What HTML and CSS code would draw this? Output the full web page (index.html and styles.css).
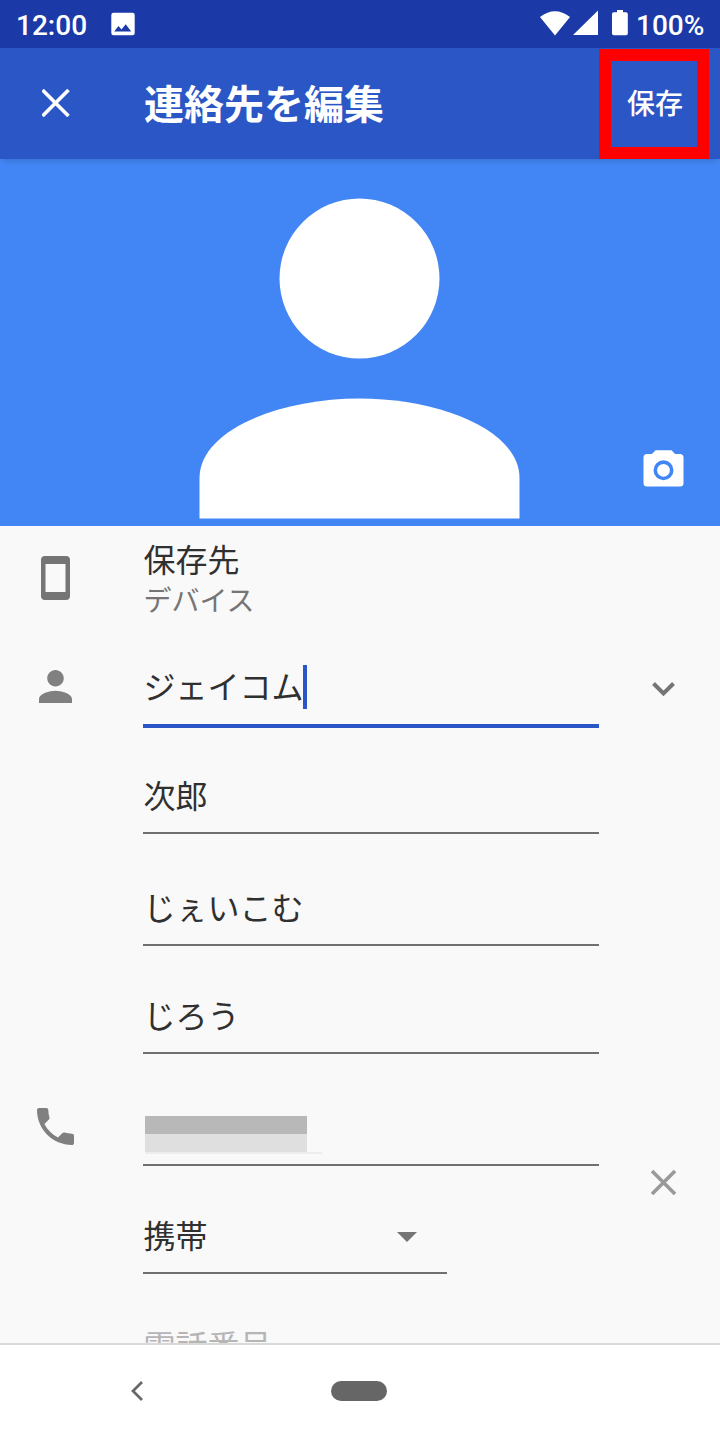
FILE: index.html
```html
<!DOCTYPE html>
<html lang="ja">
<head>
<meta charset="utf-8">
<title>連絡先を編集</title>
<link rel="stylesheet" href="styles.css">
</head>
<body>
<div class="screen">
  <header class="status">
    <span class="clock">12:00</span>
    <svg class="status-picture" width="24" height="24" viewBox="0 0 24 24"><path fill="#fff" fill-rule="evenodd" d="M2.5 .7h19a2.200 2.200 0 0 1 2.200 2.200v18.200a2.200 2.200 0 0 1-2.200 2.200h-19a2.200 2.200 0 0 1-2.200-2.200V2.900A2.200 2.200 0 0 1 2.500 .7zM3.200 19.500h17l-5.500-7.300-4.200 5.400-3-3.600z"/></svg>
    <svg class="status-icons" width="90" height="30" viewBox="0 0 90 30" fill="#fff"><path d="M0 8Q15-3.600 30 8L15 26.500zM58 1.500V26H33z"/><path d="M77 1h6v2.200h3q1.800 0 1.800 1.800v19.500q0 1.800-1.800 1.800H73.800q-1.800 0-1.800-1.800V5q0-1.800 1.800-1.800H77z"/></svg>
    <span class="battery">100%</span>
  </header>
  <div class="appbar">
    <svg class="close" width="28" height="28" viewBox="0 0 28 28"><path d="M.5 1l26 26M26.500 1L.5 27" stroke="#fff" stroke-width="3.600"/></svg>
    <h1 class="title">連絡先を編集</h1>
    <div class="save">保存</div>
  </div>
  <div class="photo">
    <svg class="avatar" width="320" height="320" viewBox="0 0 320 320" fill="#fff"><circle cx="159.500" cy="80.500" r="80"/><path d="M-.5 320.500V280C-.5 232 79.500 200.500 159.500 200.500S319.500 232 319.500 280V320.500z"/></svg>
    <svg class="camera" width="41" height="37" viewBox="-.5 0 41 37"><path fill="#fff" d="M12 0.300h16l3.600 3.700H36.500a3.500 3.500 0 0 1 3.500 3.500v25.500a3.500 3.500 0 0 1-3.500 3.500h-33A3.500 3.500 0 0 1 0 33V7.500A3.500 3.500 0 0 1 3.500 4H8.400z"/><circle cx="20" cy="20.300" r="8.200" fill="none" stroke="#4285f4" stroke-width="3.600"/></svg>
  </div>
  <main class="form">
    <div class="row row-account">
      <svg class="lead lead-device" width="30" height="46" viewBox="0 0 30 46"><path fill="#757575" fill-rule="evenodd" d="M4 1h21A4 4 0 0 1 29 5v36a4 4 0 0 1-4 4h-21a4 4 0 0 1-4-4V5a4 4 0 0 1 4-4zM4.500 9v28h20V9z"/></svg>
      <div class="account"><div class="account-title">保存先</div><div class="account-name">デバイス</div></div>
    </div>
    <div class="row row-name">
      <svg class="lead lead-person" width="33" height="33" viewBox="4 4 16 16"><path fill="#808080" d="M12 12c2.210 0 4-1.790 4-4s-1.790-4-4-4-4 1.790-4 4 1.790 4 4 4zm0 2c-2.670 0-8 1.340-8 4v2h16v-2c0-2.660-5.330-4-8-4z"/></svg>
      <div class="field focused">ジェイコム<span class="caret"></span></div>
      <svg class="trail trail-expand" width="24" height="16" viewBox="0 0 24 16"><path d="M1.500 2.500l10 10 10-10" fill="none" stroke="#757575" stroke-width="4"/></svg>
    </div>
    <div class="row row-given"><div class="field">次郎</div></div>
    <div class="row row-kana"><div class="field">じぇいこむ</div></div>
    <div class="row row-given-kana"><div class="field">じろう</div></div>
    <div class="row row-phone">
      <svg class="lead lead-phone" width="37" height="37" viewBox="3 3 18 18"><path fill="#808080" d="M6.620 10.790c1.440 2.830 3.760 5.140 6.590 6.590l2.200-2.200c.27-.27.67-.36 1.020-.24 1.120.37 2.330.57 3.570.57.550 0 1 .45 1 1V20c0 .55-.45 1-1 1-9.390 0-17-7.610-17-17 0-.55.45-1 1-1h3.500c.55 0 1 .45 1 1 0 1.250.2 2.450.57 3.570.11.350.03.740-.25 1.020l-2.200 2.200z"/></svg>
      <div class="field masked"><div class="mask"><div class="mask-dark"></div><div class="mask-light"></div><div class="mask-edge"></div></div></div>
    </div>
    <div class="row row-type">
      <div class="field short">携帯<svg class="dropdown" width="20" height="10" viewBox="0 0 20 10"><path fill="#757575" d="M0 0h20L10 10z"/></svg></div>
      <svg class="trail trail-remove" width="26" height="26" viewBox="0 0 26 26"><path d="M1 2l23 23M24 2L1 25" stroke="#999" stroke-width="3.600"/></svg>
    </div>
    <div class="row row-next"><div class="hint">電話番号</div></div>
  </main>
  <nav class="nav">
    <svg class="back" width="12" height="20" viewBox="0 0 12 20"><path d="M11 1L2 10l9 9" fill="none" stroke="#666" stroke-width="2.700"/></svg>
    <div class="home"></div>
  </nav>
</div>
</body>
</html>
```
FILE: styles.css
```css
* { box-sizing: border-box; }
body { margin: 0; }
svg { display: block; flex: none; }
.screen {
  width: 720px;
  height: 1440px;
  display: flex;
  flex-direction: column;
  overflow: hidden;
  background: #f9f9f9;
  color: #303030;
  font-family: "Noto Sans CJK JP", sans-serif;
}
.status {
  height: 48px;
  flex: none;
  display: flex;
  align-items: center;
  padding: 0 16px;
  background: #1c39a8;
  color: #fff;
  font: 500 28px/48px Roboto, sans-serif;
}
.clock { width: 95px; padding-top: 3px; }
.status-icons { margin-left: auto; margin-right: 6px; }
.battery { width: 68px; padding-top: 3px; white-space: nowrap; }
.appbar {
  position: relative;
  height: 111px;
  flex: none;
  display: grid;
  grid-template-columns: 144px 1fr 110px 11px;
  align-items: center;
  background: #2a56c6;
  color: #fff;
  box-shadow: 0 5px 5px -3px rgba(0, 0, 0, .15);
}
.close { margin: 0 0 1px 42px; }
.title { margin: 0 0 4px; font-size: 40px; line-height: 60px; font-weight: 700; }
.save {
  height: 110px;
  margin-top: 1px;
  padding-left: 2px;
  border: 12px solid #f00;
  font-size: 28px;
  line-height: 83px;
  font-weight: 500;
  text-align: center;
}
.photo {
  height: 367px;
  flex: none;
  display: flex;
  align-items: flex-end;
  padding: 0 36px 8px 200px;
  background: #4285f4;
}
.avatar { overflow: visible; }
.camera { margin: 0 0 31px auto; }
.form { height: 817px; flex: none; overflow: hidden; }
.row { display: grid; grid-template-columns: 143.400px 456px 1fr; }
.row-account { height: 116px; }
.row-name { height: 86px; }
.row-given { height: 106px; }
.row-kana { height: 112px; }
.row-given-kana { height: 108px; }
.row-phone { height: 112px; }
.row-type { height: 108px; }
.lead { grid-column: 1; justify-self: center; margin-right: 32px; }
.lead-device { margin-top: 29px; }
.lead-person { margin-top: 28px; }
.lead-phone { margin-top: 54px; }
.account { grid-column: 2; padding-top: 8px; }
.account-title { font-size: 32px; line-height: 48px; }
.account-name { font-size: 28px; line-height: 34px; color: #757575; }
.field {
  grid-column: 2;
  align-self: end;
  display: flex;
  align-items: center;
  height: 64px;
  padding-bottom: 14px;
  border-bottom: 2px solid #707070;
  font-size: 32px;
  line-height: 48px;
}
.focused { height: 67px; padding-bottom: 15px; border-bottom: 4px solid #2a56c6; }
.caret { width: 4px; height: 44px; margin: 4px 0 0; background: #2a56c6; }
.short { width: 304px; justify-content: space-between; padding-right: 30px; }
.dropdown { margin-top: 5px; }
.masked { align-items: flex-end; padding: 0 0 10px 1.600px; }
.mask { width: 177px; }
.mask-dark { width: 162px; height: 18px; background: #b8b8b8; }
.mask-light { width: 162px; height: 18px; background: #dfdfdf; }
.mask-edge { height: 2px; background: #ededed; }
.trail { grid-column: 3; justify-self: center; margin-left: 8px; }
.trail-expand { margin-top: 39px; }
.trail-remove { margin-top: 3px; }
.hint { grid-column: 2; padding-top: 46px; font-size: 32px; line-height: 48px; color: #b5b5b5; }
.nav {
  height: 97px;
  flex: none;
  display: flex;
  align-items: center;
  gap: 188px;
  padding: 0 0 3px 131.300px;
  border-top: 2px solid #d9d9d9;
  background: #fff;
}
.home { width: 56px; height: 20px; border-radius: 10px; background: #666; }
```
